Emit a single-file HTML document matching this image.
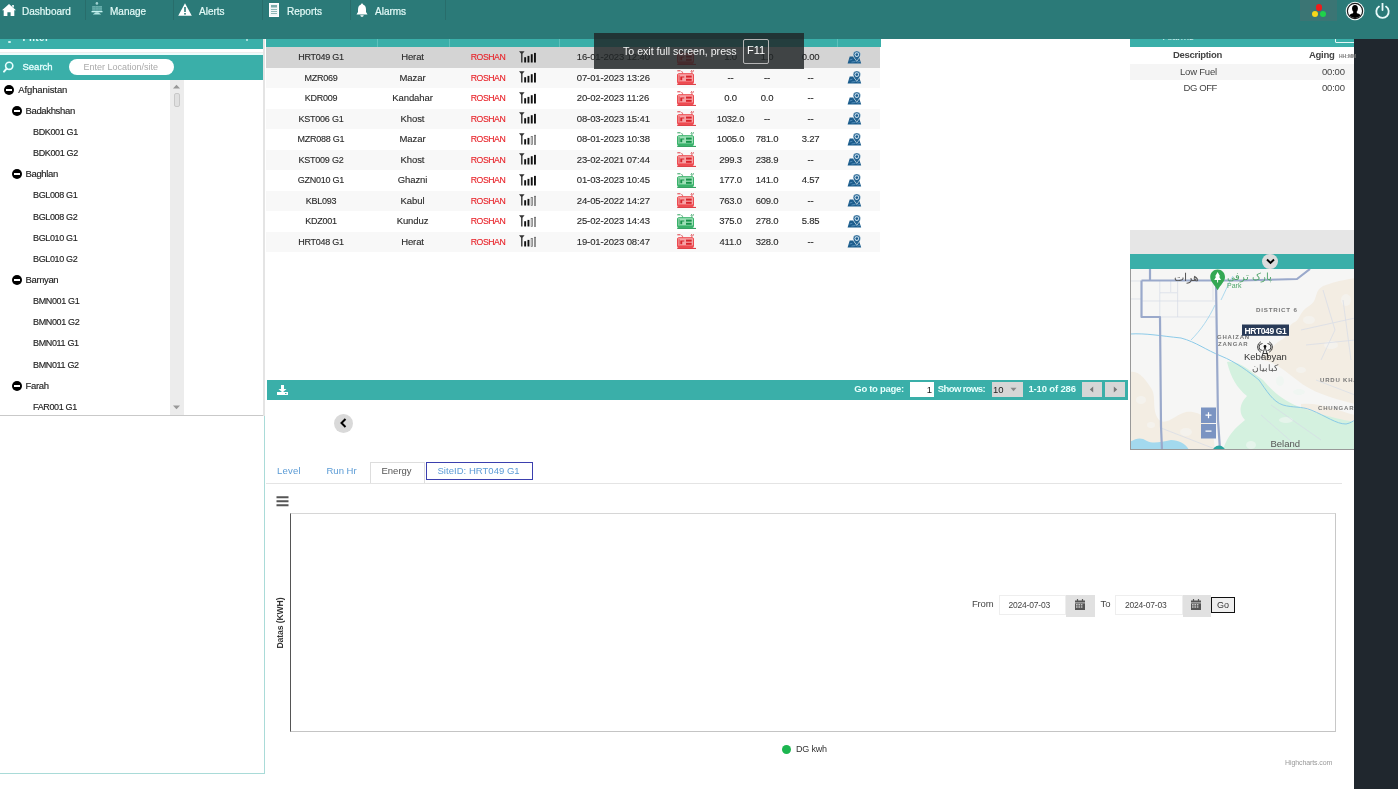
<!DOCTYPE html>
<html><head><meta charset="utf-8">
<style>
*{margin:0;padding:0;box-sizing:border-box}
html,body{width:1398px;height:789px;overflow:hidden;background:#fff;font-family:"Liberation Sans",sans-serif;color:#333;-webkit-font-smoothing:antialiased}
.a{position:absolute}
#hdr{left:0;top:0;width:1398px;height:39px;background:#2b7a78}
.nav{position:absolute;top:0;height:21px;color:#e4fbf8;font-size:10px;line-height:21px;-webkit-text-stroke:0.2px #e4fbf8}
.sep{position:absolute;top:0;width:1px;height:20px;background:#286d6b}
#dark{left:1354px;top:39px;width:44px;height:750px;background:#20272e}
.teal{background:#3aafa9}
.row{position:absolute;left:266px;width:614px;height:20.5px}
.c{position:absolute;top:0;height:20.5px;line-height:20px;font-size:9.5px;letter-spacing:-0.25px;text-align:center;white-space:nowrap;color:#2a2a2a;-webkit-text-stroke:0.12px currentColor}
.tree{position:absolute;font-size:9.5px;letter-spacing:-0.2px;line-height:12px;color:#1e1e1e;white-space:nowrap;-webkit-text-stroke:0.15px #1e1e1e}
.leaf{font-size:9px;letter-spacing:-0.35px}
.grp{letter-spacing:-0.35px}
.minus{position:absolute;width:10px;height:10px;border-radius:50%;background:#000}
.minus:after{content:"";position:absolute;left:2px;top:4px;width:6px;height:2px;background:#fff}
</style></head><body>
<div id="wrap" style="position:absolute;left:0;top:0;width:1398px;height:789px;will-change:transform">
<div id="dark" class="a"></div>
<!-- HEADER -->
<div id="hdr" class="a">
 <svg class="a" style="left:2px;top:4px" width="14" height="12" viewBox="0 0 14 12"><path d="M7 0 L14 6.2 L12.3 6.2 L12.3 12 L8.6 12 L8.6 8.3 L5.4 8.3 L5.4 12 L1.7 12 L1.7 6.2 L0 6.2 Z M10.2 1 L11.8 1 L11.8 3.8 L10.2 2.4Z" fill="#fff"/></svg>
 <div class="nav" style="left:22px;top:1px">Dashboard</div>
 <div class="sep" style="left:85px"></div>
 <svg class="a" style="left:86px;top:0" width="24" height="20" viewBox="0 0 24 20"><circle cx="10.9" cy="3.4" r="1.3" fill="#9fd0cf"/><rect x="6.2" y="6" width="9.8" height="4.8" fill="#7fc0bd" opacity="0.75"/><path d="M6.2 7.5 H16 M6.2 9.2 H16 M9.5 6 V11 M12.8 6 V11" stroke="#4f9e9b" stroke-width="0.6"/><rect x="5.5" y="11" width="11" height="1.3" fill="#c8f4f1"/><path d="M9.8 12.3 H12.2 L15.2 14.6 H6.8Z" fill="#b5e6e3"/></svg>
 <div class="nav" style="left:110px;top:1px">Manage</div>
 <div class="sep" style="left:173px"></div>
 <svg class="a" style="left:178px;top:3px" width="14" height="13" viewBox="0 0 14 13"><path d="M7 0.3 L13.8 12.7 L0.2 12.7 Z" fill="#fff"/><rect x="6.2" y="4" width="1.6" height="5" fill="#2b7a78"/><rect x="6.2" y="10" width="1.6" height="1.6" fill="#2b7a78"/></svg>
 <div class="nav" style="left:199px;top:1px">Alerts</div>
 <div class="sep" style="left:262px"></div>
 <svg class="a" style="left:269px;top:3px" width="10" height="14" viewBox="0 0 10 14"><rect x="0.5" y="0.5" width="9" height="13" fill="#f2f7f7" stroke="#fff"/><rect x="2" y="2" width="6" height="2.5" fill="#2b7a78" opacity="0.6"/><path d="M2 6.5h6M2 8.5h6M2 10.5h6" stroke="#8fb8b7" stroke-width="1"/></svg>
 <div class="nav" style="left:287px;top:1px">Reports</div>
 <div class="sep" style="left:350px"></div>
 <svg class="a" style="left:356px;top:3px" width="12" height="14" viewBox="0 0 12 14"><path d="M6 0.5 C6.8 0.5 7 1.2 7 1.6 C9 2.2 10 4 10 6.5 L10 9 L11.5 11.5 L0.5 11.5 L2 9 L2 6.5 C2 4 3 2.2 5 1.6 C5 1.2 5.2 0.5 6 0.5Z M4.3 12.3 L7.7 12.3 C7.5 13.3 6.8 13.8 6 13.8 C5.2 13.8 4.5 13.3 4.3 12.3Z" fill="#fff"/></svg>
 <div class="nav" style="left:375px;top:1px">Alarms</div>
 <div class="sep" style="left:445px"></div>
 <!-- right icons -->
 <div class="a" style="left:1300px;top:0;width:37px;height:21px;background:#3b7574"></div>
 <div class="a" style="left:1315.9px;top:4.3px;width:6.4px;height:6.4px;border-radius:50%;background:#ee1c1c"></div>
 <div class="a" style="left:1311.8px;top:10.9px;width:6px;height:6px;border-radius:50%;background:#f7d81a"></div>
 <div class="a" style="left:1320.4px;top:10.9px;width:6px;height:6px;border-radius:50%;background:#1fd24a"></div>
 <svg class="a" style="left:1345px;top:1px" width="20" height="20" viewBox="0 0 20 20"><defs><clipPath id="uc"><circle cx="10" cy="10" r="7"/></clipPath></defs><circle cx="10" cy="10" r="9.3" fill="#f4fbfb"/><circle cx="10" cy="10" r="7.6" fill="#fff" stroke="#1a1a1a" stroke-width="1.2"/><g clip-path="url(#uc)" fill="#000"><ellipse cx="10" cy="7.6" rx="2.9" ry="3.6"/><path d="M8.3 10.5 L11.7 10.5 L11.9 12.3 C14.5 12.8 16.5 14 17 17 L17 18 L3 18 L3 17 C3.5 14 5.5 12.8 8.1 12.3Z"/></g></svg>
 <svg class="a" style="left:1374px;top:3px" width="17" height="17" viewBox="0 0 17 17"><path d="M5 3.6 A6.2 6.2 0 1 0 12 3.6" fill="none" stroke="#eafafa" stroke-width="1.8" stroke-linecap="round"/><path d="M8.5 0.5 V7" stroke="#eafafa" stroke-width="1.8" stroke-linecap="round"/></svg>
</div>
<!-- LEFT PANEL -->
<div class="a teal" style="left:0;top:39px;width:263px;height:10px;overflow:hidden">
 <div class="a" style="left:7.5px;top:1.5px;width:3px;height:2.5px;background:#e6fbfa;border-radius:1px;opacity:0.85"></div>
 <div class="a" style="left:22.5px;top:-7.5px;font-size:10px;line-height:12px;color:#e0faf8;font-weight:bold;letter-spacing:0.4px">Filter</div>
 <div class="a" style="left:246px;top:0;width:2px;height:1.5px;background:#cdeeed;opacity:0.7"></div>
</div>
<div class="a" style="left:0;top:49px;width:263px;height:2.5px;background:#fff"></div>
<div class="a" style="left:0;top:51.5px;width:263px;height:1.5px;background:#eeeeee"></div>
<div class="a" style="left:0;top:53px;width:263px;height:2px;background:#ecfcfb"></div>
<div class="a teal" style="left:0;top:55px;width:263px;height:25px">
 <svg class="a" style="left:3px;top:6px" width="11" height="12" viewBox="0 0 11 12"><circle cx="6.2" cy="4.8" r="3.6" fill="none" stroke="#e8ffff" stroke-width="1.6"/><path d="M3.6 7.6 L1 10.6" stroke="#e8ffff" stroke-width="2" stroke-linecap="round"/></svg>
 <div class="a" style="left:22.5px;top:6px;font-size:9.5px;line-height:12px;color:#e8ffff;-webkit-text-stroke:0.3px #e8ffff">Search</div>
 <div class="a" style="left:68.5px;top:3.8px;width:105px;height:16px;border-radius:8px;background:#fff"></div>
 <div class="a" style="left:83.5px;top:6.5px;font-size:9px;line-height:11px;color:#aaa">Enter Location/site</div>
</div>
<!-- tree -->
<div class="a" style="left:170px;top:80px;width:13.5px;height:335px;background:#ececec"></div>
<svg class="a" style="left:172px;top:84px" width="9" height="5" viewBox="0 0 9 5"><path d="M1 4.5 L4.5 0.8 L8 4.5Z" fill="#999"/></svg>
<div class="a" style="left:174px;top:93px;width:6px;height:14px;border-radius:2px;background:#e0e0e0;border:1px solid #c8c8c8"></div>
<svg class="a" style="left:172px;top:405px" width="9" height="5" viewBox="0 0 9 5"><path d="M1 0.5 L4.5 4.2 L8 0.5Z" fill="#999"/></svg>

<div class="minus" style="left:4px;top:84.5px"></div><div class="tree" style="left:18.2px;top:83.5px;letter-spacing:-0.1px">Afghanistan</div>
<div class="minus" style="left:11.5px;top:105.6px"></div><div class="tree grp" style="left:25.5px;top:104.6px">Badakhshan</div>
<div class="tree leaf" style="left:33px;top:126px">BDK001 G1</div>
<div class="tree leaf" style="left:33px;top:147px">BDK001 G2</div>
<div class="minus" style="left:11.5px;top:169px"></div><div class="tree grp" style="left:25.5px;top:168px">Baghlan</div>
<div class="tree leaf" style="left:33px;top:189.3px">BGL008 G1</div>
<div class="tree leaf" style="left:33px;top:210.5px">BGL008 G2</div>
<div class="tree leaf" style="left:33px;top:231.6px">BGL010 G1</div>
<div class="tree leaf" style="left:33px;top:252.8px">BGL010 G2</div>
<div class="minus" style="left:11.5px;top:275px"></div><div class="tree grp" style="left:25.5px;top:274px">Bamyan</div>
<div class="tree leaf" style="left:33px;top:295.1px">BMN001 G1</div>
<div class="tree leaf" style="left:33px;top:316.3px">BMN001 G2</div>
<div class="tree leaf" style="left:33px;top:337.4px">BMN011 G1</div>
<div class="tree leaf" style="left:33px;top:358.6px">BMN011 G2</div>
<div class="minus" style="left:11.5px;top:380.7px"></div><div class="tree grp" style="left:25.5px;top:379.7px">Farah</div>
<div class="tree leaf" style="left:33px;top:400.9px">FAR001 G1</div>
<div class="a" style="left:0;top:415px;width:264px;height:1px;background:#c9c9c9"></div>
<div class="a" style="left:0;top:416px;width:265px;height:358px;border-right:1.5px solid #a9dbd8;border-bottom:1.5px solid #a9dbd8"></div>
<div class="a" style="left:263px;top:39px;width:2px;height:377px;background:#e4e4e4"></div>
<div class="a teal" style="left:266px;top:39px;width:615px;height:8px"></div>
<div class="a" style="left:376.5px;top:39px;width:1px;height:8px;background:#5cc0bb"></div>
<div class="a" style="left:449.3px;top:39px;width:1px;height:8px;background:#5cc0bb"></div>
<div class="a" style="left:558.7px;top:39px;width:1px;height:8px;background:#5cc0bb"></div>
<div class="a" style="left:836.8px;top:39px;width:1px;height:8px;background:#5cc0bb"></div>
<div class="row" style="top:47.0px;background:#d4d4d4"><div class="c" style="left:0;width:110px;font-size:9px;letter-spacing:-0.25px">HRT049 G1</div><div class="c" style="left:110px;width:73px;letter-spacing:-0.1px">Herat</div><div class="c" style="left:195px;width:54px;color:#e8232a;font-size:8.7px;letter-spacing:-0.45px">ROSHAN</div><svg class="a" style="left:253px;top:3.75px" width="18" height="12" viewBox="0 0 18 12"><path d="M0 0.2 L5.6 0.2 L3.5 2.8 L3.5 11.5 L2.1 11.5 L2.1 2.8Z" fill="#333"/><rect x="5.2" y="6.2" width="1.9" height="5.3" fill="#111"/><rect x="8.5" y="4.9" width="1.9" height="6.6" fill="#111"/><rect x="11.8" y="3.2" width="1.9" height="8.3" fill="#111"/><rect x="15" y="1.9" width="1.9" height="9.6" fill="#111"/></svg><div class="c" style="left:310.8px;text-align:left;letter-spacing:-0.12px">16-01-2023 12:40</div><svg class="a" style="left:411px;top:2.8px" width="20" height="15" viewBox="0 0 20 15"><path d="M0.3 0.8h3.2M4.6 1.2l1 1.3M5.3 2.6v1" stroke="#d8232b" stroke-width="0.9"/><path d="M14.6 0.3l-0.6 1.6M16.4 0.3l-0.6 1.6M14.9 2.2v1.4" stroke="#d8232b" stroke-width="0.9"/><rect x="0.5" y="3.7" width="16" height="9.9" rx="1.2" fill="#f7a3a6" stroke="#ee4a50" stroke-width="1"/><rect x="1" y="11.4" width="15" height="2" fill="#ee4a50"/><rect x="1.6" y="5.2" width="1" height="5.6" fill="#d8232b" opacity="0.7"/><path d="M3.3 6.4 H7.3 V7.6 H5.2 V10.2 H3.3Z" fill="#d8232b"/><rect x="9" y="5.6" width="5.7" height="2" fill="#d8232b"/><rect x="9" y="8.8" width="5.7" height="2" fill="#d8232b"/><rect x="0.2" y="13.9" width="18.8" height="1.1" fill="#d8232b" opacity="0.85"/></svg><div class="c" style="left:434px;width:61px">1.0</div><div class="c" style="left:477px;width:48px">1.0</div><div class="c" style="left:520px;width:49px">0.00</div><svg class="a" style="left:580.5px;top:3.5px" width="16" height="14" viewBox="0 0 16 14"><path d="M0.6 12.4 L2.7 5.6 L6.2 5.6 L9.8 10.6 L12.3 6.8 L14.2 12.4Z" fill="#1b5c8c"/><path d="M2.6 9 L5.4 8.2 M4.5 11 L8.5 10.5 M10.5 11.2 L13 10.2" stroke="#6a9fc8" stroke-width="0.7"/><path d="M9.8 -0.1 A3.7 3.7 0 0 1 13.5 3.6 C13.5 6 11.3 8 9.8 10.4 C8.3 8 6.1 6 6.1 3.6 A3.7 3.7 0 0 1 9.8 -0.1Z" fill="#23628f" stroke="#e8f2f8" stroke-width="0.5"/><circle cx="9.8" cy="3.6" r="2.3" fill="#d6e9f7"/><circle cx="9.8" cy="3.6" r="1.35" fill="#1b5c8c"/></svg></div>
<div class="row" style="top:67.5px;background:#f8f8f8"><div class="c" style="left:0;width:110px;font-size:9px;letter-spacing:-0.25px">MZR069</div><div class="c" style="left:110px;width:73px;letter-spacing:-0.1px">Mazar</div><div class="c" style="left:195px;width:54px;color:#e8232a;font-size:8.7px;letter-spacing:-0.45px">ROSHAN</div><svg class="a" style="left:253px;top:3.75px" width="18" height="12" viewBox="0 0 18 12"><path d="M0 0.2 L5.6 0.2 L3.5 2.8 L3.5 11.5 L2.1 11.5 L2.1 2.8Z" fill="#333"/><rect x="5.2" y="6.2" width="1.9" height="5.3" fill="#111"/><rect x="8.5" y="4.9" width="1.9" height="6.6" fill="#111"/><rect x="11.8" y="3.2" width="1.9" height="8.3" fill="#111"/><rect x="15" y="1.9" width="1.9" height="9.6" fill="#111"/></svg><div class="c" style="left:310.8px;text-align:left;letter-spacing:-0.12px">07-01-2023 13:26</div><svg class="a" style="left:411px;top:2.8px" width="20" height="15" viewBox="0 0 20 15"><path d="M0.3 0.8h3.2M4.6 1.2l1 1.3M5.3 2.6v1" stroke="#d8232b" stroke-width="0.9"/><path d="M14.6 0.3l-0.6 1.6M16.4 0.3l-0.6 1.6M14.9 2.2v1.4" stroke="#d8232b" stroke-width="0.9"/><rect x="0.5" y="3.7" width="16" height="9.9" rx="1.2" fill="#f7a3a6" stroke="#ee4a50" stroke-width="1"/><rect x="1" y="11.4" width="15" height="2" fill="#ee4a50"/><rect x="1.6" y="5.2" width="1" height="5.6" fill="#d8232b" opacity="0.7"/><path d="M3.3 6.4 H7.3 V7.6 H5.2 V10.2 H3.3Z" fill="#d8232b"/><rect x="9" y="5.6" width="5.7" height="2" fill="#d8232b"/><rect x="9" y="8.8" width="5.7" height="2" fill="#d8232b"/><rect x="0.2" y="13.9" width="18.8" height="1.1" fill="#d8232b" opacity="0.85"/></svg><div class="c" style="left:434px;width:61px">--</div><div class="c" style="left:477px;width:48px">--</div><div class="c" style="left:520px;width:49px">--</div><svg class="a" style="left:580.5px;top:3.5px" width="16" height="14" viewBox="0 0 16 14"><path d="M0.6 12.4 L2.7 5.6 L6.2 5.6 L9.8 10.6 L12.3 6.8 L14.2 12.4Z" fill="#1b5c8c"/><path d="M2.6 9 L5.4 8.2 M4.5 11 L8.5 10.5 M10.5 11.2 L13 10.2" stroke="#6a9fc8" stroke-width="0.7"/><path d="M9.8 -0.1 A3.7 3.7 0 0 1 13.5 3.6 C13.5 6 11.3 8 9.8 10.4 C8.3 8 6.1 6 6.1 3.6 A3.7 3.7 0 0 1 9.8 -0.1Z" fill="#23628f" stroke="#e8f2f8" stroke-width="0.5"/><circle cx="9.8" cy="3.6" r="2.3" fill="#d6e9f7"/><circle cx="9.8" cy="3.6" r="1.35" fill="#1b5c8c"/></svg></div>
<div class="row" style="top:88.0px;background:#ffffff"><div class="c" style="left:0;width:110px;font-size:9px;letter-spacing:-0.25px">KDR009</div><div class="c" style="left:110px;width:73px;letter-spacing:-0.1px">Kandahar</div><div class="c" style="left:195px;width:54px;color:#e8232a;font-size:8.7px;letter-spacing:-0.45px">ROSHAN</div><svg class="a" style="left:253px;top:3.75px" width="18" height="12" viewBox="0 0 18 12"><path d="M0 0.2 L5.6 0.2 L3.5 2.8 L3.5 11.5 L2.1 11.5 L2.1 2.8Z" fill="#333"/><rect x="5.2" y="6.2" width="1.9" height="5.3" fill="#111"/><rect x="8.5" y="4.9" width="1.9" height="6.6" fill="#111"/><rect x="11.8" y="3.2" width="1.9" height="8.3" fill="#111"/><rect x="15" y="1.9" width="1.9" height="9.6" fill="#111"/></svg><div class="c" style="left:310.8px;text-align:left;letter-spacing:-0.12px">20-02-2023 11:26</div><svg class="a" style="left:411px;top:2.8px" width="20" height="15" viewBox="0 0 20 15"><path d="M0.3 0.8h3.2M4.6 1.2l1 1.3M5.3 2.6v1" stroke="#d8232b" stroke-width="0.9"/><path d="M14.6 0.3l-0.6 1.6M16.4 0.3l-0.6 1.6M14.9 2.2v1.4" stroke="#d8232b" stroke-width="0.9"/><rect x="0.5" y="3.7" width="16" height="9.9" rx="1.2" fill="#f7a3a6" stroke="#ee4a50" stroke-width="1"/><rect x="1" y="11.4" width="15" height="2" fill="#ee4a50"/><rect x="1.6" y="5.2" width="1" height="5.6" fill="#d8232b" opacity="0.7"/><path d="M3.3 6.4 H7.3 V7.6 H5.2 V10.2 H3.3Z" fill="#d8232b"/><rect x="9" y="5.6" width="5.7" height="2" fill="#d8232b"/><rect x="9" y="8.8" width="5.7" height="2" fill="#d8232b"/><rect x="0.2" y="13.9" width="18.8" height="1.1" fill="#d8232b" opacity="0.85"/></svg><div class="c" style="left:434px;width:61px">0.0</div><div class="c" style="left:477px;width:48px">0.0</div><div class="c" style="left:520px;width:49px">--</div><svg class="a" style="left:580.5px;top:3.5px" width="16" height="14" viewBox="0 0 16 14"><path d="M0.6 12.4 L2.7 5.6 L6.2 5.6 L9.8 10.6 L12.3 6.8 L14.2 12.4Z" fill="#1b5c8c"/><path d="M2.6 9 L5.4 8.2 M4.5 11 L8.5 10.5 M10.5 11.2 L13 10.2" stroke="#6a9fc8" stroke-width="0.7"/><path d="M9.8 -0.1 A3.7 3.7 0 0 1 13.5 3.6 C13.5 6 11.3 8 9.8 10.4 C8.3 8 6.1 6 6.1 3.6 A3.7 3.7 0 0 1 9.8 -0.1Z" fill="#23628f" stroke="#e8f2f8" stroke-width="0.5"/><circle cx="9.8" cy="3.6" r="2.3" fill="#d6e9f7"/><circle cx="9.8" cy="3.6" r="1.35" fill="#1b5c8c"/></svg></div>
<div class="row" style="top:108.5px;background:#f8f8f8"><div class="c" style="left:0;width:110px;font-size:9px;letter-spacing:-0.25px">KST006 G1</div><div class="c" style="left:110px;width:73px;letter-spacing:-0.1px">Khost</div><div class="c" style="left:195px;width:54px;color:#e8232a;font-size:8.7px;letter-spacing:-0.45px">ROSHAN</div><svg class="a" style="left:253px;top:3.75px" width="18" height="12" viewBox="0 0 18 12"><path d="M0 0.2 L5.6 0.2 L3.5 2.8 L3.5 11.5 L2.1 11.5 L2.1 2.8Z" fill="#333"/><rect x="5.2" y="6.2" width="1.9" height="5.3" fill="#111"/><rect x="8.5" y="4.9" width="1.9" height="6.6" fill="#111"/><rect x="11.8" y="3.2" width="1.9" height="8.3" fill="#111"/><rect x="15" y="1.9" width="1.9" height="9.6" fill="#111"/></svg><div class="c" style="left:310.8px;text-align:left;letter-spacing:-0.12px">08-03-2023 15:41</div><svg class="a" style="left:411px;top:2.8px" width="20" height="15" viewBox="0 0 20 15"><path d="M0.3 0.8h3.2M4.6 1.2l1 1.3M5.3 2.6v1" stroke="#d8232b" stroke-width="0.9"/><path d="M14.6 0.3l-0.6 1.6M16.4 0.3l-0.6 1.6M14.9 2.2v1.4" stroke="#d8232b" stroke-width="0.9"/><rect x="0.5" y="3.7" width="16" height="9.9" rx="1.2" fill="#f7a3a6" stroke="#ee4a50" stroke-width="1"/><rect x="1" y="11.4" width="15" height="2" fill="#ee4a50"/><rect x="1.6" y="5.2" width="1" height="5.6" fill="#d8232b" opacity="0.7"/><path d="M3.3 6.4 H7.3 V7.6 H5.2 V10.2 H3.3Z" fill="#d8232b"/><rect x="9" y="5.6" width="5.7" height="2" fill="#d8232b"/><rect x="9" y="8.8" width="5.7" height="2" fill="#d8232b"/><rect x="0.2" y="13.9" width="18.8" height="1.1" fill="#d8232b" opacity="0.85"/></svg><div class="c" style="left:434px;width:61px">1032.0</div><div class="c" style="left:477px;width:48px">--</div><div class="c" style="left:520px;width:49px">--</div><svg class="a" style="left:580.5px;top:3.5px" width="16" height="14" viewBox="0 0 16 14"><path d="M0.6 12.4 L2.7 5.6 L6.2 5.6 L9.8 10.6 L12.3 6.8 L14.2 12.4Z" fill="#1b5c8c"/><path d="M2.6 9 L5.4 8.2 M4.5 11 L8.5 10.5 M10.5 11.2 L13 10.2" stroke="#6a9fc8" stroke-width="0.7"/><path d="M9.8 -0.1 A3.7 3.7 0 0 1 13.5 3.6 C13.5 6 11.3 8 9.8 10.4 C8.3 8 6.1 6 6.1 3.6 A3.7 3.7 0 0 1 9.8 -0.1Z" fill="#23628f" stroke="#e8f2f8" stroke-width="0.5"/><circle cx="9.8" cy="3.6" r="2.3" fill="#d6e9f7"/><circle cx="9.8" cy="3.6" r="1.35" fill="#1b5c8c"/></svg></div>
<div class="row" style="top:129.0px;background:#ffffff"><div class="c" style="left:0;width:110px;font-size:9px;letter-spacing:-0.25px">MZR088 G1</div><div class="c" style="left:110px;width:73px;letter-spacing:-0.1px">Mazar</div><div class="c" style="left:195px;width:54px;color:#e8232a;font-size:8.7px;letter-spacing:-0.45px">ROSHAN</div><svg class="a" style="left:253px;top:3.75px" width="18" height="12" viewBox="0 0 18 12"><path d="M0 0.2 L5.6 0.2 L3.5 2.8 L3.5 11.5 L2.1 11.5 L2.1 2.8Z" fill="#333"/><rect x="5.2" y="6.2" width="1.9" height="5.3" fill="#111"/><rect x="8.5" y="4.9" width="1.9" height="6.6" fill="#111"/><rect x="12.15" y="3.5500000000000003" width="1.3" height="7.95" fill="#fff" stroke="#666" stroke-width="0.7"/><rect x="15.35" y="2.25" width="1.3" height="9.25" fill="#fff" stroke="#666" stroke-width="0.7"/></svg><div class="c" style="left:310.8px;text-align:left;letter-spacing:-0.12px">08-01-2023 10:38</div><svg class="a" style="left:411px;top:2.8px" width="20" height="15" viewBox="0 0 20 15"><path d="M0.3 0.8h3.2M4.6 1.2l1 1.3M5.3 2.6v1" stroke="#16924a" stroke-width="0.9"/><path d="M14.6 0.3l-0.6 1.6M16.4 0.3l-0.6 1.6M14.9 2.2v1.4" stroke="#16924a" stroke-width="0.9"/><rect x="0.5" y="3.7" width="16" height="9.9" rx="1.2" fill="#9fe0b8" stroke="#38b26a" stroke-width="1"/><rect x="1" y="11.4" width="15" height="2" fill="#38b26a"/><rect x="1.6" y="5.2" width="1" height="5.6" fill="#16924a" opacity="0.7"/><path d="M3.3 6.4 H7.3 V7.6 H5.2 V10.2 H3.3Z" fill="#16924a"/><rect x="9" y="5.6" width="5.7" height="2" fill="#16924a"/><rect x="9" y="8.8" width="5.7" height="2" fill="#16924a"/><rect x="0.2" y="13.9" width="18.8" height="1.1" fill="#16924a" opacity="0.85"/></svg><div class="c" style="left:434px;width:61px">1005.0</div><div class="c" style="left:477px;width:48px">781.0</div><div class="c" style="left:520px;width:49px">3.27</div><svg class="a" style="left:580.5px;top:3.5px" width="16" height="14" viewBox="0 0 16 14"><path d="M0.6 12.4 L2.7 5.6 L6.2 5.6 L9.8 10.6 L12.3 6.8 L14.2 12.4Z" fill="#1b5c8c"/><path d="M2.6 9 L5.4 8.2 M4.5 11 L8.5 10.5 M10.5 11.2 L13 10.2" stroke="#6a9fc8" stroke-width="0.7"/><path d="M9.8 -0.1 A3.7 3.7 0 0 1 13.5 3.6 C13.5 6 11.3 8 9.8 10.4 C8.3 8 6.1 6 6.1 3.6 A3.7 3.7 0 0 1 9.8 -0.1Z" fill="#23628f" stroke="#e8f2f8" stroke-width="0.5"/><circle cx="9.8" cy="3.6" r="2.3" fill="#d6e9f7"/><circle cx="9.8" cy="3.6" r="1.35" fill="#1b5c8c"/></svg></div>
<div class="row" style="top:149.5px;background:#f8f8f8"><div class="c" style="left:0;width:110px;font-size:9px;letter-spacing:-0.25px">KST009 G2</div><div class="c" style="left:110px;width:73px;letter-spacing:-0.1px">Khost</div><div class="c" style="left:195px;width:54px;color:#e8232a;font-size:8.7px;letter-spacing:-0.45px">ROSHAN</div><svg class="a" style="left:253px;top:3.75px" width="18" height="12" viewBox="0 0 18 12"><path d="M0 0.2 L5.6 0.2 L3.5 2.8 L3.5 11.5 L2.1 11.5 L2.1 2.8Z" fill="#333"/><rect x="5.2" y="6.2" width="1.9" height="5.3" fill="#111"/><rect x="8.5" y="4.9" width="1.9" height="6.6" fill="#111"/><rect x="11.8" y="3.2" width="1.9" height="8.3" fill="#111"/><rect x="15" y="1.9" width="1.9" height="9.6" fill="#111"/></svg><div class="c" style="left:310.8px;text-align:left;letter-spacing:-0.12px">23-02-2021 07:44</div><svg class="a" style="left:411px;top:2.8px" width="20" height="15" viewBox="0 0 20 15"><path d="M0.3 0.8h3.2M4.6 1.2l1 1.3M5.3 2.6v1" stroke="#d8232b" stroke-width="0.9"/><path d="M14.6 0.3l-0.6 1.6M16.4 0.3l-0.6 1.6M14.9 2.2v1.4" stroke="#d8232b" stroke-width="0.9"/><rect x="0.5" y="3.7" width="16" height="9.9" rx="1.2" fill="#f7a3a6" stroke="#ee4a50" stroke-width="1"/><rect x="1" y="11.4" width="15" height="2" fill="#ee4a50"/><rect x="1.6" y="5.2" width="1" height="5.6" fill="#d8232b" opacity="0.7"/><path d="M3.3 6.4 H7.3 V7.6 H5.2 V10.2 H3.3Z" fill="#d8232b"/><rect x="9" y="5.6" width="5.7" height="2" fill="#d8232b"/><rect x="9" y="8.8" width="5.7" height="2" fill="#d8232b"/><rect x="0.2" y="13.9" width="18.8" height="1.1" fill="#d8232b" opacity="0.85"/></svg><div class="c" style="left:434px;width:61px">299.3</div><div class="c" style="left:477px;width:48px">238.9</div><div class="c" style="left:520px;width:49px">--</div><svg class="a" style="left:580.5px;top:3.5px" width="16" height="14" viewBox="0 0 16 14"><path d="M0.6 12.4 L2.7 5.6 L6.2 5.6 L9.8 10.6 L12.3 6.8 L14.2 12.4Z" fill="#1b5c8c"/><path d="M2.6 9 L5.4 8.2 M4.5 11 L8.5 10.5 M10.5 11.2 L13 10.2" stroke="#6a9fc8" stroke-width="0.7"/><path d="M9.8 -0.1 A3.7 3.7 0 0 1 13.5 3.6 C13.5 6 11.3 8 9.8 10.4 C8.3 8 6.1 6 6.1 3.6 A3.7 3.7 0 0 1 9.8 -0.1Z" fill="#23628f" stroke="#e8f2f8" stroke-width="0.5"/><circle cx="9.8" cy="3.6" r="2.3" fill="#d6e9f7"/><circle cx="9.8" cy="3.6" r="1.35" fill="#1b5c8c"/></svg></div>
<div class="row" style="top:170.0px;background:#ffffff"><div class="c" style="left:0;width:110px;font-size:9px;letter-spacing:-0.25px">GZN010 G1</div><div class="c" style="left:110px;width:73px;letter-spacing:-0.1px">Ghazni</div><div class="c" style="left:195px;width:54px;color:#e8232a;font-size:8.7px;letter-spacing:-0.45px">ROSHAN</div><svg class="a" style="left:253px;top:3.75px" width="18" height="12" viewBox="0 0 18 12"><path d="M0 0.2 L5.6 0.2 L3.5 2.8 L3.5 11.5 L2.1 11.5 L2.1 2.8Z" fill="#333"/><rect x="5.2" y="6.2" width="1.9" height="5.3" fill="#111"/><rect x="8.5" y="4.9" width="1.9" height="6.6" fill="#111"/><rect x="11.8" y="3.2" width="1.9" height="8.3" fill="#111"/><rect x="15" y="1.9" width="1.9" height="9.6" fill="#111"/></svg><div class="c" style="left:310.8px;text-align:left;letter-spacing:-0.12px">01-03-2023 10:45</div><svg class="a" style="left:411px;top:2.8px" width="20" height="15" viewBox="0 0 20 15"><path d="M0.3 0.8h3.2M4.6 1.2l1 1.3M5.3 2.6v1" stroke="#16924a" stroke-width="0.9"/><path d="M14.6 0.3l-0.6 1.6M16.4 0.3l-0.6 1.6M14.9 2.2v1.4" stroke="#16924a" stroke-width="0.9"/><rect x="0.5" y="3.7" width="16" height="9.9" rx="1.2" fill="#9fe0b8" stroke="#38b26a" stroke-width="1"/><rect x="1" y="11.4" width="15" height="2" fill="#38b26a"/><rect x="1.6" y="5.2" width="1" height="5.6" fill="#16924a" opacity="0.7"/><path d="M3.3 6.4 H7.3 V7.6 H5.2 V10.2 H3.3Z" fill="#16924a"/><rect x="9" y="5.6" width="5.7" height="2" fill="#16924a"/><rect x="9" y="8.8" width="5.7" height="2" fill="#16924a"/><rect x="0.2" y="13.9" width="18.8" height="1.1" fill="#16924a" opacity="0.85"/></svg><div class="c" style="left:434px;width:61px">177.0</div><div class="c" style="left:477px;width:48px">141.0</div><div class="c" style="left:520px;width:49px">4.57</div><svg class="a" style="left:580.5px;top:3.5px" width="16" height="14" viewBox="0 0 16 14"><path d="M0.6 12.4 L2.7 5.6 L6.2 5.6 L9.8 10.6 L12.3 6.8 L14.2 12.4Z" fill="#1b5c8c"/><path d="M2.6 9 L5.4 8.2 M4.5 11 L8.5 10.5 M10.5 11.2 L13 10.2" stroke="#6a9fc8" stroke-width="0.7"/><path d="M9.8 -0.1 A3.7 3.7 0 0 1 13.5 3.6 C13.5 6 11.3 8 9.8 10.4 C8.3 8 6.1 6 6.1 3.6 A3.7 3.7 0 0 1 9.8 -0.1Z" fill="#23628f" stroke="#e8f2f8" stroke-width="0.5"/><circle cx="9.8" cy="3.6" r="2.3" fill="#d6e9f7"/><circle cx="9.8" cy="3.6" r="1.35" fill="#1b5c8c"/></svg></div>
<div class="row" style="top:190.5px;background:#f8f8f8"><div class="c" style="left:0;width:110px;font-size:9px;letter-spacing:-0.25px">KBL093</div><div class="c" style="left:110px;width:73px;letter-spacing:-0.1px">Kabul</div><div class="c" style="left:195px;width:54px;color:#e8232a;font-size:8.7px;letter-spacing:-0.45px">ROSHAN</div><svg class="a" style="left:253px;top:3.75px" width="18" height="12" viewBox="0 0 18 12"><path d="M0 0.2 L5.6 0.2 L3.5 2.8 L3.5 11.5 L2.1 11.5 L2.1 2.8Z" fill="#333"/><rect x="5.2" y="6.2" width="1.9" height="5.3" fill="#111"/><rect x="8.5" y="4.9" width="1.9" height="6.6" fill="#111"/><rect x="12.15" y="3.5500000000000003" width="1.3" height="7.95" fill="#fff" stroke="#666" stroke-width="0.7"/><rect x="15.35" y="2.25" width="1.3" height="9.25" fill="#fff" stroke="#666" stroke-width="0.7"/></svg><div class="c" style="left:310.8px;text-align:left;letter-spacing:-0.12px">24-05-2022 14:27</div><svg class="a" style="left:411px;top:2.8px" width="20" height="15" viewBox="0 0 20 15"><path d="M0.3 0.8h3.2M4.6 1.2l1 1.3M5.3 2.6v1" stroke="#d8232b" stroke-width="0.9"/><path d="M14.6 0.3l-0.6 1.6M16.4 0.3l-0.6 1.6M14.9 2.2v1.4" stroke="#d8232b" stroke-width="0.9"/><rect x="0.5" y="3.7" width="16" height="9.9" rx="1.2" fill="#f7a3a6" stroke="#ee4a50" stroke-width="1"/><rect x="1" y="11.4" width="15" height="2" fill="#ee4a50"/><rect x="1.6" y="5.2" width="1" height="5.6" fill="#d8232b" opacity="0.7"/><path d="M3.3 6.4 H7.3 V7.6 H5.2 V10.2 H3.3Z" fill="#d8232b"/><rect x="9" y="5.6" width="5.7" height="2" fill="#d8232b"/><rect x="9" y="8.8" width="5.7" height="2" fill="#d8232b"/><rect x="0.2" y="13.9" width="18.8" height="1.1" fill="#d8232b" opacity="0.85"/></svg><div class="c" style="left:434px;width:61px">763.0</div><div class="c" style="left:477px;width:48px">609.0</div><div class="c" style="left:520px;width:49px">--</div><svg class="a" style="left:580.5px;top:3.5px" width="16" height="14" viewBox="0 0 16 14"><path d="M0.6 12.4 L2.7 5.6 L6.2 5.6 L9.8 10.6 L12.3 6.8 L14.2 12.4Z" fill="#1b5c8c"/><path d="M2.6 9 L5.4 8.2 M4.5 11 L8.5 10.5 M10.5 11.2 L13 10.2" stroke="#6a9fc8" stroke-width="0.7"/><path d="M9.8 -0.1 A3.7 3.7 0 0 1 13.5 3.6 C13.5 6 11.3 8 9.8 10.4 C8.3 8 6.1 6 6.1 3.6 A3.7 3.7 0 0 1 9.8 -0.1Z" fill="#23628f" stroke="#e8f2f8" stroke-width="0.5"/><circle cx="9.8" cy="3.6" r="2.3" fill="#d6e9f7"/><circle cx="9.8" cy="3.6" r="1.35" fill="#1b5c8c"/></svg></div>
<div class="row" style="top:211.0px;background:#ffffff"><div class="c" style="left:0;width:110px;font-size:9px;letter-spacing:-0.25px">KDZ001</div><div class="c" style="left:110px;width:73px;letter-spacing:-0.1px">Kunduz</div><div class="c" style="left:195px;width:54px;color:#e8232a;font-size:8.7px;letter-spacing:-0.45px">ROSHAN</div><svg class="a" style="left:253px;top:3.75px" width="18" height="12" viewBox="0 0 18 12"><path d="M0 0.2 L5.6 0.2 L3.5 2.8 L3.5 11.5 L2.1 11.5 L2.1 2.8Z" fill="#333"/><rect x="5.2" y="6.2" width="1.9" height="5.3" fill="#111"/><rect x="8.5" y="4.9" width="1.9" height="6.6" fill="#111"/><rect x="12.15" y="3.5500000000000003" width="1.3" height="7.95" fill="#fff" stroke="#666" stroke-width="0.7"/><rect x="15.35" y="2.25" width="1.3" height="9.25" fill="#fff" stroke="#666" stroke-width="0.7"/></svg><div class="c" style="left:310.8px;text-align:left;letter-spacing:-0.12px">25-02-2023 14:43</div><svg class="a" style="left:411px;top:2.8px" width="20" height="15" viewBox="0 0 20 15"><path d="M0.3 0.8h3.2M4.6 1.2l1 1.3M5.3 2.6v1" stroke="#16924a" stroke-width="0.9"/><path d="M14.6 0.3l-0.6 1.6M16.4 0.3l-0.6 1.6M14.9 2.2v1.4" stroke="#16924a" stroke-width="0.9"/><rect x="0.5" y="3.7" width="16" height="9.9" rx="1.2" fill="#9fe0b8" stroke="#38b26a" stroke-width="1"/><rect x="1" y="11.4" width="15" height="2" fill="#38b26a"/><rect x="1.6" y="5.2" width="1" height="5.6" fill="#16924a" opacity="0.7"/><path d="M3.3 6.4 H7.3 V7.6 H5.2 V10.2 H3.3Z" fill="#16924a"/><rect x="9" y="5.6" width="5.7" height="2" fill="#16924a"/><rect x="9" y="8.8" width="5.7" height="2" fill="#16924a"/><rect x="0.2" y="13.9" width="18.8" height="1.1" fill="#16924a" opacity="0.85"/></svg><div class="c" style="left:434px;width:61px">375.0</div><div class="c" style="left:477px;width:48px">278.0</div><div class="c" style="left:520px;width:49px">5.85</div><svg class="a" style="left:580.5px;top:3.5px" width="16" height="14" viewBox="0 0 16 14"><path d="M0.6 12.4 L2.7 5.6 L6.2 5.6 L9.8 10.6 L12.3 6.8 L14.2 12.4Z" fill="#1b5c8c"/><path d="M2.6 9 L5.4 8.2 M4.5 11 L8.5 10.5 M10.5 11.2 L13 10.2" stroke="#6a9fc8" stroke-width="0.7"/><path d="M9.8 -0.1 A3.7 3.7 0 0 1 13.5 3.6 C13.5 6 11.3 8 9.8 10.4 C8.3 8 6.1 6 6.1 3.6 A3.7 3.7 0 0 1 9.8 -0.1Z" fill="#23628f" stroke="#e8f2f8" stroke-width="0.5"/><circle cx="9.8" cy="3.6" r="2.3" fill="#d6e9f7"/><circle cx="9.8" cy="3.6" r="1.35" fill="#1b5c8c"/></svg></div>
<div class="row" style="top:231.5px;background:#f8f8f8"><div class="c" style="left:0;width:110px;font-size:9px;letter-spacing:-0.25px">HRT048 G1</div><div class="c" style="left:110px;width:73px;letter-spacing:-0.1px">Herat</div><div class="c" style="left:195px;width:54px;color:#e8232a;font-size:8.7px;letter-spacing:-0.45px">ROSHAN</div><svg class="a" style="left:253px;top:3.75px" width="18" height="12" viewBox="0 0 18 12"><path d="M0 0.2 L5.6 0.2 L3.5 2.8 L3.5 11.5 L2.1 11.5 L2.1 2.8Z" fill="#333"/><rect x="5.2" y="6.2" width="1.9" height="5.3" fill="#111"/><rect x="8.5" y="4.9" width="1.9" height="6.6" fill="#111"/><rect x="12.15" y="3.5500000000000003" width="1.3" height="7.95" fill="#fff" stroke="#666" stroke-width="0.7"/><rect x="15.35" y="2.25" width="1.3" height="9.25" fill="#fff" stroke="#666" stroke-width="0.7"/></svg><div class="c" style="left:310.8px;text-align:left;letter-spacing:-0.12px">19-01-2023 08:47</div><svg class="a" style="left:411px;top:2.8px" width="20" height="15" viewBox="0 0 20 15"><path d="M0.3 0.8h3.2M4.6 1.2l1 1.3M5.3 2.6v1" stroke="#d8232b" stroke-width="0.9"/><path d="M14.6 0.3l-0.6 1.6M16.4 0.3l-0.6 1.6M14.9 2.2v1.4" stroke="#d8232b" stroke-width="0.9"/><rect x="0.5" y="3.7" width="16" height="9.9" rx="1.2" fill="#f7a3a6" stroke="#ee4a50" stroke-width="1"/><rect x="1" y="11.4" width="15" height="2" fill="#ee4a50"/><rect x="1.6" y="5.2" width="1" height="5.6" fill="#d8232b" opacity="0.7"/><path d="M3.3 6.4 H7.3 V7.6 H5.2 V10.2 H3.3Z" fill="#d8232b"/><rect x="9" y="5.6" width="5.7" height="2" fill="#d8232b"/><rect x="9" y="8.8" width="5.7" height="2" fill="#d8232b"/><rect x="0.2" y="13.9" width="18.8" height="1.1" fill="#d8232b" opacity="0.85"/></svg><div class="c" style="left:434px;width:61px">411.0</div><div class="c" style="left:477px;width:48px">328.0</div><div class="c" style="left:520px;width:49px">--</div><svg class="a" style="left:580.5px;top:3.5px" width="16" height="14" viewBox="0 0 16 14"><path d="M0.6 12.4 L2.7 5.6 L6.2 5.6 L9.8 10.6 L12.3 6.8 L14.2 12.4Z" fill="#1b5c8c"/><path d="M2.6 9 L5.4 8.2 M4.5 11 L8.5 10.5 M10.5 11.2 L13 10.2" stroke="#6a9fc8" stroke-width="0.7"/><path d="M9.8 -0.1 A3.7 3.7 0 0 1 13.5 3.6 C13.5 6 11.3 8 9.8 10.4 C8.3 8 6.1 6 6.1 3.6 A3.7 3.7 0 0 1 9.8 -0.1Z" fill="#23628f" stroke="#e8f2f8" stroke-width="0.5"/><circle cx="9.8" cy="3.6" r="2.3" fill="#d6e9f7"/><circle cx="9.8" cy="3.6" r="1.35" fill="#1b5c8c"/></svg></div><!-- ALARMS PANEL -->
<div class="a teal" style="left:1130px;top:39px;width:224px;height:8px;overflow:hidden">
 <div class="a" style="left:33px;top:-8px;font-size:10px;color:#cfeceb">Alarms</div>
 <div class="a" style="left:204.5px;top:-5px;width:20px;height:9px;border:1px solid #e6f6f5;border-radius:1px"></div>
</div>
<div class="a" style="left:1130px;top:47px;width:224px;height:16.5px;font-size:9.5px;font-weight:bold;color:#444;line-height:16px">
 <div class="a" style="left:43px;top:0;letter-spacing:-0.3px">Description</div>
 <div class="a" style="left:179px;top:0;letter-spacing:-0.3px">Aging</div>
 <div class="a" style="left:209px;top:1px;font-size:5px;color:#777">HH:MM</div>
</div>
<div class="a" style="left:1130px;top:63.5px;width:224px;height:16.3px;background:#f5f5f5;font-size:9.5px;line-height:16px;color:#444">
 <div class="a" style="left:50px;top:0;letter-spacing:-0.2px">Low Fuel</div>
 <div class="a" style="left:192px;top:0;letter-spacing:-0.2px">00:00</div>
</div>
<div class="a" style="left:1130px;top:79.8px;width:224px;height:16.3px;font-size:9.5px;line-height:16px;color:#444">
 <div class="a" style="left:53.5px;top:0;letter-spacing:-0.4px">DG OFF</div>
 <div class="a" style="left:192px;top:0;letter-spacing:-0.2px">00:00</div>
</div>

<!-- MAP -->
<div class="a" style="left:1130px;top:230px;width:224px;height:24px;background:#e6e6e6"></div>
<div class="a teal" style="left:1130px;top:254px;width:224px;height:15px"></div>
<div class="a" style="left:1130px;top:269px;width:224px;height:181px;overflow:hidden;background:#f6f6f5;border-left:1px solid #999;border-bottom:1px solid #999">
<svg class="a" style="left:-1px;top:0" width="225" height="181" viewBox="1129 269 225 181">
 <!-- beige terrain right -->
 <path d="M1354 278 C1340 280 1330 283 1322 286 C1312 292 1318 300 1308 306 C1298 312 1300 318 1294 322 C1284 326 1290 336 1280 340 C1272 344 1270 352 1262 356 L1262 360 C1275 362 1285 372 1296 380 C1310 392 1330 398 1354 404Z" fill="#f3ede3"/>
 <path d="M1300 404 C1320 402 1340 412 1354 415 L1354 432 C1340 430 1320 420 1300 410Z" fill="#f3ede3"/>
 <g fill="#f6f6f4" opacity="0.6">
  <ellipse cx="1308" cy="320" rx="6" ry="4"/><ellipse cx="1330" cy="345" rx="7" ry="4"/><ellipse cx="1300" cy="370" rx="5" ry="3"/><ellipse cx="1345" cy="300" rx="5" ry="6"/>
 </g>
 <!-- beige bottom-left -->
 <path d="M1129 372 C1138 370 1145 380 1150 388 C1156 396 1150 410 1158 420 C1166 426 1175 414 1185 412 C1198 410 1210 420 1212 432 L1214 450 L1129 450Z" fill="#f3ede3"/>
 <g fill="#f6f6f4" opacity="0.6"><ellipse cx="1140" cy="400" rx="5" ry="4"/><ellipse cx="1185" cy="432" rx="6" ry="4"/><ellipse cx="1150" cy="425" rx="4" ry="3"/></g>
 <!-- green -->
 <path d="M1226 362 C1238 360 1250 372 1262 380 C1272 392 1282 400 1296 406 C1312 412 1330 418 1354 422 L1354 450 L1222 450 C1226 436 1234 428 1244 420 C1236 412 1240 402 1246 396 C1236 388 1230 378 1226 362Z" fill="#d4f1df"/>
 <g fill="#eef6f1" opacity="0.7"><ellipse cx="1279" cy="381" rx="4" ry="5"/><ellipse cx="1298" cy="392" rx="6" ry="3"/><ellipse cx="1285" cy="420" rx="7" ry="3"/><ellipse cx="1250" cy="445" rx="5" ry="4"/></g>
 <!-- water -->
 <path d="M1129 442 C1135 438 1140 437 1146 441 C1152 444 1160 442 1170 440 C1178 440 1185 444 1188 450 L1129 450Z" fill="#a3d9ee"/>
 <!-- faint roads -->
 <g stroke="#d5dbe6" stroke-width="0.7" fill="none">
  <path d="M1141 301 H1214 M1159 317 H1214 M1158.8 281 V317 M1176.6 281 V317 M1169.7 281 V292 M1159 292.8 H1176 M1212 281 V300 M1129 281 H1140 M1129 299 H1140"/>
  <path d="M1300 330 L1354 318 M1305 345 L1354 340 M1322 290 L1334 330 L1320 360 M1315 380 L1354 395 M1270 405 L1320 440 M1260 415 L1300 450 M1342 300 L1350 360"/>
  <path d="M1160 428 L1214 449"/>
 </g>
 <!-- rivers -->
 <path d="M1129 334 C1145 333 1160 336 1180 338 C1195 342 1205 350 1220 356 C1235 362 1248 372 1258 380 C1265 390 1272 402 1282 405 C1292 408 1300 406 1310 410 C1325 416 1335 424 1345 424 C1350 423 1352 421 1354 420" fill="none" stroke="#80c5e6" stroke-width="0.9"/>
 <path d="M1190 340 C1200 330 1208 318 1214 305 M1220 300 C1225 290 1228 282 1232 276" fill="none" stroke="#8ccbe9" stroke-width="0.7"/>
 <!-- roads -->
 <g stroke="#9aa9cb" stroke-width="2.2" fill="none" stroke-linejoin="round">
  <path d="M1140.5 280.5 V317 H1159 L1160 426 L1161 450 M1149 269 L1149 280.5"/>
  <path d="M1140.5 280.5 H1240 L1296 279 L1309 269"/>
  <path d="M1215 280 L1217 420 L1219 450"/>
 </g>
 <!-- labels -->
 <text x="1173" y="281" font-family="Liberation Sans" font-size="11" fill="#555">هرات</text>
 <path d="M1216.6 269.6 C1220.8 269.6 1224 272.8 1224 277 C1224 281.5 1219.5 285 1216.6 290.3 C1213.7 285 1209.2 281.5 1209.2 277 C1209.2 272.8 1212.4 269.6 1216.6 269.6Z" fill="#34a853"/>
 <path d="M1216.6 272 L1219.2 276.5 H1218 L1220 280 H1213.2 L1215.2 276.5 H1214Z M1216.1 280 H1217.1 V282.5 H1216.1Z" fill="#fff"/>
 <text x="1226" y="280" font-family="Liberation Sans" font-size="10" fill="#4fa56a">پارک ترفی</text>
 <text x="1226" y="288" font-family="Liberation Sans" font-size="7" fill="#4fa56a">Park</text>
 <text x="1255" y="311.5" font-family="Liberation Sans" font-size="6.2" font-weight="bold" fill="#777" letter-spacing="0.8">DISTRICT 6</text>
 <text x="1216" y="338.5" font-family="Liberation Sans" font-size="6" font-weight="bold" fill="#777" letter-spacing="0.8">GHAIZAN</text>
 <text x="1217" y="345.5" font-family="Liberation Sans" font-size="6" font-weight="bold" fill="#777" letter-spacing="0.8">ZANGAR</text>
 <text x="1319" y="382" font-family="Liberation Sans" font-size="6" font-weight="bold" fill="#777" letter-spacing="0.8">URDU KHA</text>
 <text x="1317" y="410" font-family="Liberation Sans" font-size="6" font-weight="bold" fill="#777" letter-spacing="0.8">CHUNGAR</text>
 <text x="1269.5" y="446.5" font-family="Liberation Sans" font-size="9.5" fill="#555">Beland</text>
 <text x="1243" y="360" font-family="Liberation Sans" font-size="9.5" fill="#333">Kebabyan</text>
 <text x="1251" y="370.5" font-family="Liberation Sans" font-size="9" fill="#555">کبابیان</text>
 <rect x="1241" y="324.5" width="47" height="11.3" fill="#283a57"/>
 <text x="1243.5" y="333.5" font-family="Liberation Sans" font-size="8.5" font-weight="bold" fill="#fff" letter-spacing="-0.4">HRT049 G1</text>
 <g stroke="#111" stroke-width="0.8" fill="none"><path d="M1261.5 343.5 A3.5 3.5 0 0 0 1261.5 350.5 M1266.5 343.5 A3.5 3.5 0 0 1 1266.5 350.5 M1259.8 341.8 A5.8 5.8 0 0 0 1259.8 352.2 M1268.2 341.8 A5.8 5.8 0 0 1 1268.2 352.2"/><path d="M1264 347 L1260.5 358 M1264 347 L1267.5 358 M1262 353.5 H1266"/></g>
 <circle cx="1264" cy="346.5" r="1.4" fill="#111"/>
 <!-- zoom buttons -->
 <rect x="1200" y="407.5" width="15" height="15.5" fill="#7b94c2"/>
 <rect x="1200" y="424" width="15" height="14.5" fill="#7b94c2"/>
 <path d="M1204.5 415.2 H1210.5 M1207.5 412.2 V418.2 M1204.5 431.2 H1210.5" stroke="#fff" stroke-width="1.2"/>
 <circle cx="1218" cy="452" r="6.5" fill="#2aa5a0"/>
</svg>
</div>
<div class="a" style="left:1262px;top:253.5px;width:15.5px;height:15.5px;border-radius:50%;background:#dcdcdc"></div>
<svg class="a" style="left:1265.5px;top:258px" width="9" height="7" viewBox="0 0 9 7"><path d="M1 1.5 L4.5 5 L8 1.5" fill="none" stroke="#000" stroke-width="1.9"/></svg>
<!-- PAGINATION -->
<div class="a teal" style="left:266.5px;top:379.5px;width:861px;height:20px"></div>
<svg class="a" style="left:277px;top:384.5px" width="11" height="10" viewBox="0 0 11 10"><path d="M4 0 H7 V4 H9.5 L5.5 7.5 L1.5 4 H4Z" fill="#fff"/><rect x="0" y="7" width="11" height="3" fill="#fff"/><rect x="8" y="8" width="1.5" height="1" fill="#3aafa9"/></svg>
<div class="a" style="left:854.3px;top:383px;font-size:9.5px;line-height:12px;color:#e8fffd;letter-spacing:-0.3px;font-weight:bold">Go to page:</div>
<div class="a" style="left:909.5px;top:382px;width:24.5px;height:15px;background:#fff;font-size:9.5px;line-height:16px;text-align:right;padding-right:2px;color:#222">1</div>
<div class="a" style="left:937.8px;top:383px;font-size:9.5px;line-height:12px;color:#e8fffd;letter-spacing:-0.6px;font-weight:bold">Show rows:</div>
<div class="a" style="left:992px;top:382px;width:31px;height:15px;background:#d6d6d6;font-size:9.5px;line-height:16px;padding-left:1px;color:#222">10</div>
<svg class="a" style="left:1010px;top:387px" width="7" height="5" viewBox="0 0 7 5"><path d="M0.5 0.8 H6.5 L3.5 4.2Z" fill="#888"/></svg>
<div class="a" style="left:1028.4px;top:383px;font-size:9.5px;line-height:12px;color:#e8fffd;letter-spacing:-0.15px;font-weight:bold">1-10 of 286</div>
<div class="a" style="left:1082px;top:382px;width:19.5px;height:15px;background:#d6d6d6"></div>
<svg class="a" style="left:1089px;top:386px" width="5" height="7" viewBox="0 0 5 7"><path d="M4.2 0.5 V6.5 L0.8 3.5Z" fill="#777"/></svg>
<div class="a" style="left:1105px;top:382px;width:20px;height:15px;background:#d6d6d6"></div>
<svg class="a" style="left:1113px;top:386px" width="5" height="7" viewBox="0 0 5 7"><path d="M0.8 0.5 V6.5 L4.2 3.5Z" fill="#777"/></svg>

<!-- back circle -->
<div class="a" style="left:333.5px;top:413.5px;width:19.5px;height:19.5px;border-radius:50%;background:#d9d9d9"></div>
<svg class="a" style="left:338.5px;top:418px" width="9" height="10" viewBox="0 0 9 10"><path d="M6.5 1 L2.5 5 L6.5 9" fill="none" stroke="#000" stroke-width="2"/></svg>

<!-- TABS -->
<div class="a" style="left:277px;top:465px;font-size:9.5px;line-height:12px;color:#5b9bd5;letter-spacing:0.25px">Level</div>
<div class="a" style="left:326.5px;top:465px;font-size:9.5px;line-height:12px;color:#5b9bd5">Run Hr</div>
<div class="a" style="left:370px;top:461.5px;width:55px;height:22px;border:1px solid #ddd;border-bottom:none;background:#fff"></div>
<div class="a" style="left:381.5px;top:465px;font-size:9.5px;line-height:12px;color:#555">Energy</div>
<div class="a" style="left:426px;top:461.5px;width:106.5px;height:18.5px;border:1.5px solid #3b3fae"></div>
<div class="a" style="left:437.5px;top:465px;font-size:9.5px;line-height:12px;color:#5b9bd5;letter-spacing:0.03px">SiteID: HRT049 G1</div>
<div class="a" style="left:266px;top:483px;width:1076px;height:1px;background:#e4e4e4"></div>

<!-- CHART -->
<svg class="a" style="left:276px;top:495.5px" width="13" height="11" viewBox="0 0 13 11"><path d="M0.5 1.2 H12.5 M0.5 5.2 H12.5 M0.5 9.2 H12.5" stroke="#555" stroke-width="2"/></svg>
<div class="a" style="left:290px;top:513px;width:1046px;height:219px;border-top:1px solid #d6d6d6;border-right:1.5px solid #c8c8c8;border-bottom:1.5px solid #c4c4c4;border-left:1.5px solid #555"></div>
<div class="a" style="left:250px;top:616.5px;width:60px;height:12px;transform:rotate(-90deg);font-size:8.6px;font-weight:bold;color:#333;text-align:center;line-height:12px;letter-spacing:-0.1px">Datas (KWH)</div>
<div class="a" style="left:972px;top:598px;font-size:9.5px;line-height:12px;color:#444;letter-spacing:-0.2px">From</div>
<div class="a" style="left:998.5px;top:595px;width:67.5px;height:19.5px;border:1px solid #eee;background:#fff;font-size:8.5px;line-height:18px;padding-left:9px;color:#444;letter-spacing:-0.2px">2024-07-03</div>
<div class="a" style="left:1066px;top:595px;width:28.5px;height:21.5px;background:#e1e1e1"></div>
<svg class="a" style="left:1075px;top:599px" width="10" height="11" viewBox="0 0 10 11"><rect x="0" y="1.5" width="10" height="9.5" fill="#555"/><path d="M2.5 0 V2.5 M7.5 0 V2.5" stroke="#555" stroke-width="1.2"/><g fill="#e1e1e1"><rect x="0" y="3.5" width="10" height="0.8"/><rect x="1" y="5.2" width="1.6" height="1.2"/><rect x="3.4" y="5.2" width="1.6" height="1.2"/><rect x="5.8" y="5.2" width="1.6" height="1.2"/><rect x="1" y="7.4" width="1.6" height="1.2"/><rect x="3.4" y="7.4" width="1.6" height="1.2"/><rect x="5.8" y="7.4" width="1.6" height="1.2"/></g></svg>
<div class="a" style="left:1100.5px;top:598px;font-size:9.5px;line-height:12px;color:#444">To</div>
<div class="a" style="left:1115px;top:595px;width:67.5px;height:19.5px;border:1px solid #eee;background:#fff;font-size:8.5px;line-height:18px;padding-left:9px;color:#444;letter-spacing:-0.2px">2024-07-03</div>
<div class="a" style="left:1182.5px;top:595px;width:28px;height:21.5px;background:#e1e1e1"></div>
<svg class="a" style="left:1191px;top:599px" width="10" height="11" viewBox="0 0 10 11"><rect x="0" y="1.5" width="10" height="9.5" fill="#555"/><path d="M2.5 0 V2.5 M7.5 0 V2.5" stroke="#555" stroke-width="1.2"/><g fill="#e1e1e1"><rect x="0" y="3.5" width="10" height="0.8"/><rect x="1" y="5.2" width="1.6" height="1.2"/><rect x="3.4" y="5.2" width="1.6" height="1.2"/><rect x="5.8" y="5.2" width="1.6" height="1.2"/><rect x="1" y="7.4" width="1.6" height="1.2"/><rect x="3.4" y="7.4" width="1.6" height="1.2"/><rect x="5.8" y="7.4" width="1.6" height="1.2"/></g></svg>
<div class="a" style="left:1211px;top:597px;width:24px;height:16px;border:1.5px solid #111;background:#efefef;font-size:9px;line-height:15px;text-align:center;color:#333">Go</div>
<div class="a" style="left:782px;top:744.5px;width:9px;height:9px;border-radius:50%;background:#1cb650"></div>
<div class="a" style="left:796px;top:743px;font-size:9px;line-height:12px;color:#333;letter-spacing:-0.2px">DG kwh</div>
<div class="a" style="left:1285px;top:758px;font-size:7px;line-height:10px;color:#999;letter-spacing:-0.1px">Highcharts.com</div>

<!-- TOAST -->
<div class="a" style="left:594px;top:33px;width:209.5px;height:36px;background:rgba(32,36,38,0.82)"></div>
<div class="a" style="left:623px;top:43.7px;font-size:10.6px;line-height:14px;color:#f2f2f2">To exit full screen, press</div>
<div class="a" style="left:743px;top:39px;width:26px;height:25px;border:1px solid #b5b5b5;border-radius:2px;font-size:11px;line-height:21.5px;color:#fff;text-align:center">F11</div>

</div>
</body></html>
